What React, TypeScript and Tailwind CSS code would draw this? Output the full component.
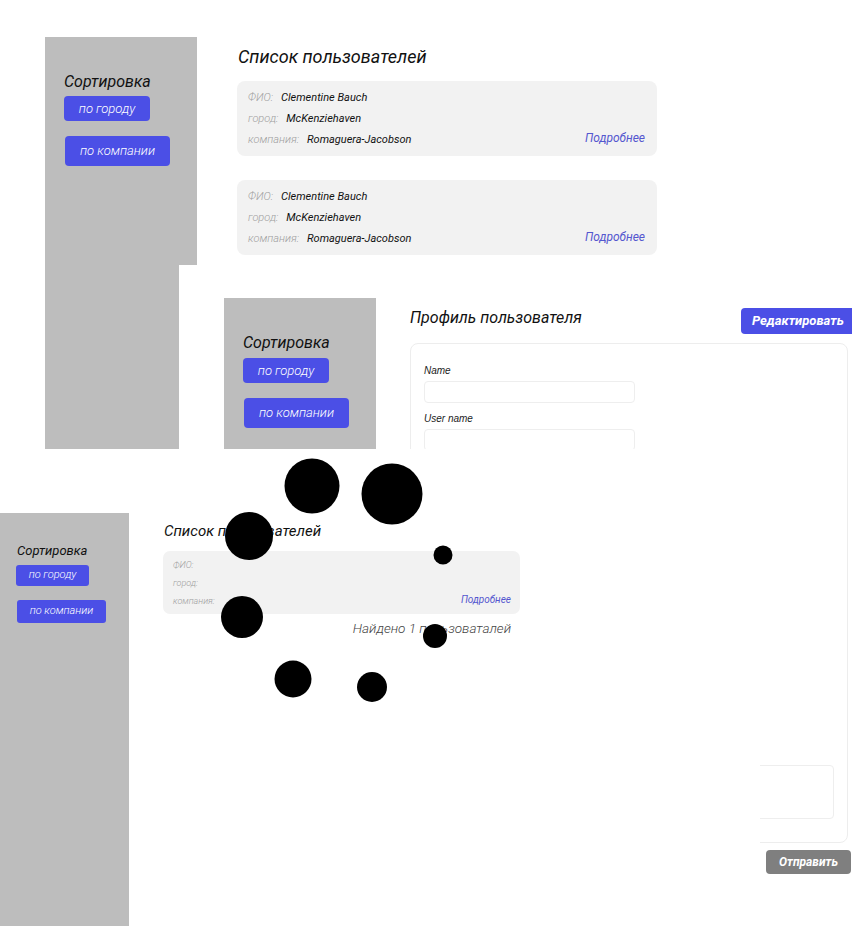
import React from "react";

const font = { fontFamily: "Roboto, 'Noto Sans', sans-serif" };

function Card1() {
  return (
    <div className="w-[420px] h-[75px] bg-[#f2f2f2] rounded-[8px] pl-[11px] pr-[12px] pt-[6px] text-[11px] leading-[21px] italic">
      <div className="flex gap-[8px]">
        <span className="text-[#a0a0a0] font-light">ФИО:</span>
        <span className="text-[#111]">Clementine Bauch</span>
      </div>
      <div className="flex gap-[8px]">
        <span className="text-[#a0a0a0] font-light">город:</span>
        <span className="text-[#111]">McKenziehaven</span>
      </div>
      <div className="flex justify-between items-end">
        <div className="flex gap-[8px]">
          <span className="text-[#a0a0a0] font-light">компания:</span>
          <span className="text-[#111]">Romaguera-Jacobson</span>
        </div>
        <span className="text-[12px] leading-[17px] mb-[3px] text-[#5457cf]">Подробнее</span>
      </div>
    </div>
  );
}

const fields = ["Name", "User name", "E-mail", "Street", "City", "Zip code", "Phone", "Website"];

export default function App() {
  return (
    <div className="relative w-[852px] h-[926px] overflow-hidden bg-white" style={font}>
      {/* Screenshot 1 */}
      <div className="absolute left-0 top-0 w-[852px] h-[449px] bg-white flex pl-[45px] pt-[37px]">
        <aside className="w-[152px] bg-[#bdbdbd] flex flex-col items-start pl-[19px] pt-[35px]">
          <div className="text-[16px] leading-[19px] italic text-[#111]">Сортировка</div>
          <button className="mt-[5px] w-[86px] h-[25px] rounded-[4px] bg-[#4b4fe6] text-white italic font-light text-[13px]">
            по городу
          </button>
          <button className="mt-[15px] ml-[1px] w-[105px] h-[30px] rounded-[4px] bg-[#4b4fe6] text-white italic font-light text-[13px]">
            по компании
          </button>
        </aside>
        <main className="ml-[40px] pt-[9px] flex flex-col">
          <h1 className="text-[18px] leading-[22px] italic text-[#111] ml-[1px]">Список пользователей</h1>
          <div className="mt-[13px] flex flex-col gap-[24px]">
            <Card1 />
            <Card1 />
          </div>
        </main>
      </div>

      {/* Screenshot 2 */}
      <div className="absolute left-[179px] top-[265px] w-[673px] h-[661px] bg-white flex pl-[45px] pt-[33px] overflow-hidden">
        <aside className="w-[152px] shrink-0 bg-[#bdbdbd] flex flex-col items-start pl-[19px] pt-[35px]">
          <div className="text-[16px] leading-[19px] italic text-[#111]">Сортировка</div>
          <button className="mt-[6px] w-[86px] h-[25px] rounded-[4px] bg-[#4b4fe6] text-white italic font-light text-[13px]">
            по городу
          </button>
          <button className="mt-[15px] ml-[1px] w-[105px] h-[30px] rounded-[4px] bg-[#4b4fe6] text-white italic font-light text-[13px]">
            по компании
          </button>
        </aside>
        <main className="ml-[34px] pt-[10px] w-[450px] shrink-0 flex flex-col">
          <div className="flex justify-between items-start w-[447px]">
            <h2 className="text-[16px] leading-[20px] italic text-[#111]">Профиль пользователя</h2>
            <button className="w-[116px] h-[26px] rounded-l-[4px] bg-[#4b4fe6] text-white italic font-bold text-[13px] text-left pl-[11px]">
              Редактировать
            </button>
          </div>
          <div className="mt-[9px] w-[438px] border border-[#ededed] rounded-[8px] px-[13px] pt-[21px] pb-[23px] flex flex-col gap-[10px]">
            {fields.map((f) => (
              <div key={f} className="flex flex-col gap-[4px]">
                <label className="text-[10px] leading-[12px] italic text-[#222]" style={{ fontFamily: "'Liberation Sans', Arial, sans-serif" }}>
                  {f}
                </label>
                <div className="w-[211px] h-[22px] border border-[#eeeeee] rounded-[4px]" />
              </div>
            ))}
            <div className="flex flex-col gap-[4px]">
              <label className="text-[10px] leading-[12px] italic text-[#222]" style={{ fontFamily: "'Liberation Sans', Arial, sans-serif" }}>
                Comment
              </label>
              <div className="w-[410px] h-[54px] border border-[#eeeeee] rounded-[4px]" />
            </div>
          </div>
          <div className="w-[441px] flex justify-end mt-[7px]">
            <button className="w-[85px] h-[24px] rounded-[4px] bg-[#7f7f7f] text-white italic font-bold text-[12px]">
              Отправить
            </button>
          </div>
        </main>
      </div>

      {/* Screenshot 3 */}
      <div className="absolute left-0 top-[449px] w-[760px] h-[477px] bg-white flex pt-[64px]">
        <aside className="w-[129px] shrink-0 bg-[#bdbdbd] flex flex-col items-start pl-[17px] pt-[30px]">
          <div className="text-[13px] leading-[16px] italic text-[#111]">Сортировка</div>
          <button className="mt-[6px] -ml-[1px] w-[73px] h-[21px] rounded-[3px] bg-[#4b4fe6] text-white italic font-light text-[11px]">
            по городу
          </button>
          <button className="mt-[14px] w-[89px] h-[23px] rounded-[3px] bg-[#4b4fe6] text-white italic font-light text-[11px]">
            по компании
          </button>
        </aside>
        <main className="ml-[34px] pt-[9px] flex flex-col">
          <h1 className="text-[15px] leading-[18px] italic text-[#111] ml-[1px]">Список пользователей</h1>
          <div className="mt-[11px] w-[357px] h-[63px] bg-[#f2f2f2] rounded-[7px] pl-[10px] pr-[9px] pt-[5px] text-[9px] leading-[18px] italic font-light text-[#a0a0a0]">
            <div>ФИО:</div>
            <div>город:</div>
            <div className="flex justify-between items-end">
              <span>компания:</span>
              <span className="text-[10px] leading-[14px] mb-[3px] font-normal text-[#5457cf]">Подробнее</span>
            </div>
          </div>
          <div className="w-[348px] mt-[6px] text-right text-[13.5px] leading-[16px] italic font-light text-[#444]">
            Найдено 1 пользоваталей
          </div>
        </main>
        <svg className="absolute left-0 top-0 pointer-events-none" width="760" height="477" viewBox="0 0 760 477">
          <circle cx="312" cy="37" r="27.5" fill="#000" />
          <circle cx="392" cy="45" r="30.5" fill="#000" />
          <circle cx="249" cy="87" r="24" fill="#000" />
          <circle cx="443" cy="106" r="9.5" fill="#000" />
          <circle cx="242" cy="168" r="21" fill="#000" />
          <circle cx="435" cy="187" r="12" fill="#000" />
          <circle cx="293" cy="230" r="18.5" fill="#000" />
          <circle cx="372" cy="238" r="15" fill="#000" />
        </svg>
      </div>
    </div>
  );
}
